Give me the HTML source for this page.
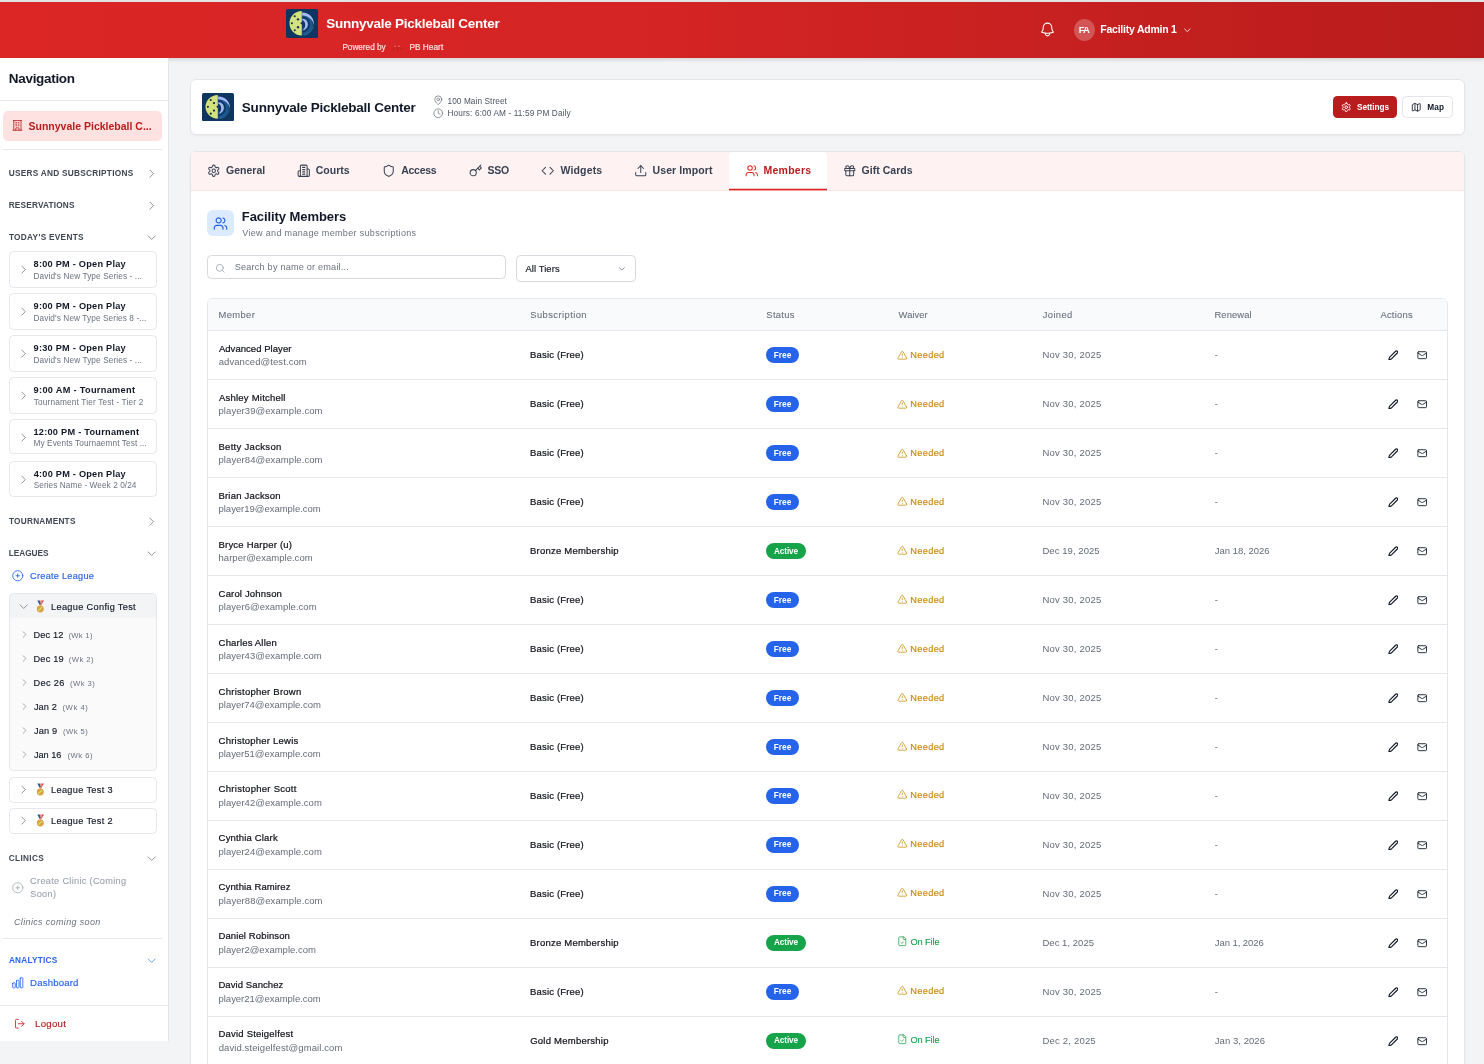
<!DOCTYPE html>
<html lang="en"><head><meta charset="utf-8"><title>Sunnyvale Pickleball Center - Members</title><style>
html,body{margin:0;padding:0}
body{width:1484px;height:1064px;overflow:hidden;background:#f3f4f6;position:relative;font-family:"Liberation Sans",sans-serif;-webkit-font-smoothing:antialiased}
#app{position:absolute;left:0;top:0;width:1484px;height:1064px;overflow:hidden;will-change:transform}
.t{position:absolute;white-space:nowrap}
.b{position:absolute;box-sizing:border-box}
</style></head><body><div id="app">
<div class="b" style="left:0.00px;top:0.00px;width:1484.00px;height:2.00px;background:#e3e6e7"></div>
<div class="b" style="left:0.00px;top:2.00px;width:1484.00px;height:56.00px;background:linear-gradient(90deg,#dc2626 0%,#d42424 45%,#b91c1c 100%);box-shadow:0 2px 4px rgba(0,0,0,.13)"></div>
<svg class="b" style="left:286.00px;top:9.00px" width="32.00" height="29.00" viewBox="0 0 32 28" preserveAspectRatio="none"><rect width="32" height="28" rx="1.6" fill="#0f365f"/><path d="M15.8 1.9A12.3 11.85 0 0 0 15.8 25.6Z" fill="#d3e37b"/><g fill="#1a2a4a"><circle cx="8.75" cy="7" r="1.05"/><circle cx="12" cy="10" r="1.15"/><circle cx="5.9" cy="13.75" r="1.05"/><circle cx="12" cy="17.5" r="1.15"/><circle cx="8.75" cy="20.5" r="1.05"/><circle cx="15.5" cy="13.75" r="1"/></g><path d="M16.2 4.6A10.6 10.5 0 0 1 16.2 25.6Z" fill="#1b588d"/><path d="M16.2 8A7 7 0 0 1 16.2 22" fill="none" stroke="#0f365f" stroke-width="1.5"/><path d="M16.2 11.6A3.4 3.4 0 0 1 16.2 18.4Z" fill="#0f365f"/><path d="M16.1 3.5C23 3.3 28.3 8.4 28 15.6 27 10.6 22.6 6.5 16.1 6.3Z" fill="#a9b9f6"/><path d="M16.3 9.3C20 9.4 21.9 12 21.8 14.9 21.7 17.8 19.8 20 16.5 20.8 18.5 19 19.3 17.2 19.2 14.9 19.1 12.8 18.2 11.3 16.3 10.5Z" fill="#a9b9f6"/><path d="M27.2 16.5C26.6 21 23.2 24.4 18 25.3" fill="none" stroke="#3f7bb0" stroke-width=".7" opacity=".8"/></svg>
<div class="t" style="left:326.27px;top:16px;font-size:13.50px;line-height:15px;font-weight:700;color:#ffffff;letter-spacing:-0.251px;">Sunnyvale Pickleball Center</div>
<div class="t" style="left:342.39px;top:43px;font-size:8.25px;line-height:9px;font-weight:400;color:#fbe3e3;letter-spacing:-0.036px;-webkit-text-stroke:0.15px #fbe3e3;">Powered by</div>
<div class="t" style="left:409.49px;top:43px;font-size:8.25px;line-height:9px;font-weight:400;color:#fbe3e3;letter-spacing:0.031px;-webkit-text-stroke:0.18px #fbe3e3;">PB Heart</div>
<svg class="b" style="left:391px;top:43px" width="14" height="9" viewBox="391 43 14 9"><g fill="#a81c20" opacity=".55"><circle cx="393.4" cy="49.1" r="1"/><circle cx="397.5" cy="49.5" r="1"/><circle cx="398.8" cy="47.6" r=".9"/><circle cx="401.6" cy="48.8" r="1.1"/></g><g fill="#f3b9b9" opacity=".5"><ellipse cx="395.2" cy="46.1" rx="1.1" ry=".6"/><ellipse cx="399" cy="46.2" rx="1" ry=".7"/></g></svg>
<svg class="b" style="left:1038.60px;top:20.50px;" width="17.00" height="17.00" viewBox="0 0 24 24" fill="none" stroke="#ffffff" stroke-width="1.5" stroke-linecap="round" stroke-linejoin="round"><path d="M14.857 17.082a23.848 23.848 0 005.454-1.31A8.967 8.967 0 0118 9.75v-.7V9A6 6 0 006 9v.75a8.967 8.967 0 01-2.312 6.022c1.733.64 3.56 1.085 5.455 1.31m5.714 0a24.255 24.255 0 01-5.714 0m5.714 0a3 3 0 11-5.714 0"/></svg>
<div class="b" style="left:1074.00px;top:19.00px;width:21.00px;height:22.00px;border-radius:50%;background:rgba(255,255,255,.24)"></div>
<div class="t" style="left:1078.82px;top:24px;font-size:9.50px;line-height:11px;font-weight:700;color:#ffffff;letter-spacing:-1.104px;">FA</div>
<div class="t" style="left:1100.28px;top:23px;font-size:10.50px;line-height:12px;font-weight:700;color:#ffffff;letter-spacing:-0.232px;">Facility Admin 1</div>
<svg class="b" style="left:1183.00px;top:26.00px;" width="8.60" height="8.60" viewBox="0 0 24 24" fill="none" stroke="#ffffff" stroke-width="2.2" stroke-linecap="round" stroke-linejoin="round"><path d="M19.5 8.25l-7.5 7.5-7.5-7.5"/></svg>
<div class="b" style="left:0.00px;top:58.00px;width:169.00px;height:983.00px;background:#ffffff;border-right:1px solid #e2e5ea"></div>
<div class="t" style="left:8.86px;top:71px;font-size:13.50px;line-height:15px;font-weight:700;color:#111827;letter-spacing:-0.313px;">Navigation</div>
<div class="b" style="left:0.00px;top:100.00px;width:168.00px;height:1.00px;background:#e5e7eb"></div>
<div class="b" style="left:3.00px;top:111.00px;width:159.00px;height:30.00px;background:#fee2e2;border-radius:5px"></div>
<svg class="b" style="left:10.50px;top:119.10px;" width="12.80" height="12.80" viewBox="0 0 24 24" fill="none" stroke="#b91c1c" stroke-width="1.6" stroke-linecap="round" stroke-linejoin="round"><path d="M3.75 21h16.5M4.5 3h15M5.25 3v18m13.5-18v18M9 6.75h1.5m-1.5 3h1.5m-1.5 3h1.5m3-6H15m-1.5 3H15m-1.5 3H15M9 21v-3.375c0-.621.504-1.125 1.125-1.125h3.75c.621 0 1.125.504 1.125 1.125V21"/></svg>
<div class="t" style="left:28.52px;top:120px;font-size:10.50px;line-height:12px;font-weight:700;color:#b91c1c;letter-spacing:0.002px;">Sunnyvale Pickleball C...</div>
<div class="b" style="left:3.00px;top:149.00px;width:159.00px;height:1.00px;background:#e5e7eb"></div>
<div class="t" style="left:8.70px;top:169px;font-size:8.25px;line-height:9px;font-weight:700;color:#3f4754;letter-spacing:0.275px;">USERS AND SUBSCRIPTIONS</div>
<svg class="b" style="left:145.50px;top:167.60px;" width="11.40" height="11.40" viewBox="0 0 24 24" fill="none" stroke="#6b7280" stroke-width="1.6" stroke-linecap="round" stroke-linejoin="round"><path d="M8.25 4.5l7.5 7.5-7.5 7.5"/></svg>
<div class="t" style="left:8.67px;top:201px;font-size:8.25px;line-height:9px;font-weight:700;color:#3f4754;letter-spacing:0.191px;">RESERVATIONS</div>
<svg class="b" style="left:145.50px;top:199.60px;" width="11.40" height="11.40" viewBox="0 0 24 24" fill="none" stroke="#6b7280" stroke-width="1.6" stroke-linecap="round" stroke-linejoin="round"><path d="M8.25 4.5l7.5 7.5-7.5 7.5"/></svg>
<div class="t" style="left:8.94px;top:233px;font-size:8.25px;line-height:9px;font-weight:700;color:#3f4754;letter-spacing:0.295px;">TODAY&#x27;S EVENTS</div>
<svg class="b" style="left:145.60px;top:231.50px;" width="11.40" height="11.40" viewBox="0 0 24 24" fill="none" stroke="#6b7280" stroke-width="1.6" stroke-linecap="round" stroke-linejoin="round"><path d="M19.5 8.25l-7.5 7.5-7.5-7.5"/></svg>
<div class="b" style="left:9.00px;top:251.00px;width:148.00px;height:36.50px;background:#fff;border:1px solid #e5e7eb;border-radius:4.5px"></div>
<svg class="b" style="left:17.60px;top:264.00px;" width="11.20" height="11.20" viewBox="0 0 24 24" fill="none" stroke="#6b7280" stroke-width="1.6" stroke-linecap="round" stroke-linejoin="round"><path d="M8.25 4.5l7.5 7.5-7.5 7.5"/></svg>
<div class="t" style="left:33.62px;top:259px;font-size:9.20px;line-height:10px;font-weight:700;color:#111827;letter-spacing:0.236px;">8:00 PM - Open Play</div>
<div class="t" style="left:33.49px;top:272px;font-size:8.25px;line-height:9px;font-weight:400;color:#6b7280;letter-spacing:0.103px;">David&#x27;s New Type Series - ...</div>
<div class="b" style="left:9.00px;top:293.00px;width:148.00px;height:36.50px;background:#fff;border:1px solid #e5e7eb;border-radius:4.5px"></div>
<svg class="b" style="left:17.60px;top:306.00px;" width="11.20" height="11.20" viewBox="0 0 24 24" fill="none" stroke="#6b7280" stroke-width="1.6" stroke-linecap="round" stroke-linejoin="round"><path d="M8.25 4.5l7.5 7.5-7.5 7.5"/></svg>
<div class="t" style="left:33.61px;top:301px;font-size:9.20px;line-height:10px;font-weight:700;color:#111827;letter-spacing:0.238px;">9:00 PM - Open Play</div>
<div class="t" style="left:33.49px;top:314px;font-size:8.25px;line-height:9px;font-weight:400;color:#6b7280;letter-spacing:0.096px;">David&#x27;s New Type Series 8 -...</div>
<div class="b" style="left:9.00px;top:335.00px;width:148.00px;height:36.50px;background:#fff;border:1px solid #e5e7eb;border-radius:4.5px"></div>
<svg class="b" style="left:17.60px;top:348.00px;" width="11.20" height="11.20" viewBox="0 0 24 24" fill="none" stroke="#6b7280" stroke-width="1.6" stroke-linecap="round" stroke-linejoin="round"><path d="M8.25 4.5l7.5 7.5-7.5 7.5"/></svg>
<div class="t" style="left:33.61px;top:343px;font-size:9.20px;line-height:10px;font-weight:700;color:#111827;letter-spacing:0.238px;">9:30 PM - Open Play</div>
<div class="t" style="left:33.49px;top:356px;font-size:8.25px;line-height:9px;font-weight:400;color:#6b7280;letter-spacing:0.103px;">David&#x27;s New Type Series - ...</div>
<div class="b" style="left:9.00px;top:377.00px;width:148.00px;height:36.50px;background:#fff;border:1px solid #e5e7eb;border-radius:4.5px"></div>
<svg class="b" style="left:17.60px;top:390.00px;" width="11.20" height="11.20" viewBox="0 0 24 24" fill="none" stroke="#6b7280" stroke-width="1.6" stroke-linecap="round" stroke-linejoin="round"><path d="M8.25 4.5l7.5 7.5-7.5 7.5"/></svg>
<div class="t" style="left:33.61px;top:385px;font-size:9.20px;line-height:10px;font-weight:700;color:#111827;letter-spacing:0.310px;">9:00 AM - Tournament</div>
<div class="t" style="left:33.79px;top:398px;font-size:8.25px;line-height:9px;font-weight:400;color:#6b7280;letter-spacing:0.164px;">Tournament Tier Test - Tier 2</div>
<div class="b" style="left:9.00px;top:419.20px;width:148.00px;height:35.30px;background:#fff;border:1px solid #e5e7eb;border-radius:4.5px"></div>
<svg class="b" style="left:17.60px;top:432.00px;" width="11.20" height="11.20" viewBox="0 0 24 24" fill="none" stroke="#6b7280" stroke-width="1.6" stroke-linecap="round" stroke-linejoin="round"><path d="M8.25 4.5l7.5 7.5-7.5 7.5"/></svg>
<div class="t" style="left:33.45px;top:427px;font-size:9.20px;line-height:10px;font-weight:700;color:#111827;letter-spacing:0.260px;">12:00 PM - Tournament</div>
<div class="t" style="left:33.49px;top:439px;font-size:8.25px;line-height:9px;font-weight:400;color:#6b7280;letter-spacing:0.093px;">My Events Tournaemnt Test ...</div>
<div class="b" style="left:9.00px;top:461.00px;width:148.00px;height:35.50px;background:#fff;border:1px solid #e5e7eb;border-radius:4.5px"></div>
<svg class="b" style="left:17.60px;top:474.00px;" width="11.20" height="11.20" viewBox="0 0 24 24" fill="none" stroke="#6b7280" stroke-width="1.6" stroke-linecap="round" stroke-linejoin="round"><path d="M8.25 4.5l7.5 7.5-7.5 7.5"/></svg>
<div class="t" style="left:33.72px;top:469px;font-size:9.20px;line-height:10px;font-weight:700;color:#111827;letter-spacing:0.228px;">4:00 PM - Open Play</div>
<div class="t" style="left:33.68px;top:481px;font-size:8.25px;line-height:9px;font-weight:400;color:#6b7280;letter-spacing:0.066px;">Series Name - Week 2 0/24</div>
<div class="t" style="left:8.94px;top:517px;font-size:8.25px;line-height:9px;font-weight:700;color:#3f4754;letter-spacing:0.245px;">TOURNAMENTS</div>
<svg class="b" style="left:145.50px;top:515.60px;" width="11.40" height="11.40" viewBox="0 0 24 24" fill="none" stroke="#6b7280" stroke-width="1.6" stroke-linecap="round" stroke-linejoin="round"><path d="M8.25 4.5l7.5 7.5-7.5 7.5"/></svg>
<div class="t" style="left:8.67px;top:549px;font-size:8.25px;line-height:9px;font-weight:700;color:#3f4754;letter-spacing:0.007px;">LEAGUES</div>
<svg class="b" style="left:145.60px;top:547.50px;" width="11.40" height="11.40" viewBox="0 0 24 24" fill="none" stroke="#6b7280" stroke-width="1.6" stroke-linecap="round" stroke-linejoin="round"><path d="M19.5 8.25l-7.5 7.5-7.5-7.5"/></svg>
<svg class="b" style="left:10.75px;top:568.85px;" width="13.50" height="13.50" viewBox="0 0 24 24" fill="none" stroke="#2563eb" stroke-width="1.5" stroke-linecap="round" stroke-linejoin="round"><path d="M12 9v6m3-3H9m12 0a9 9 0 11-18 0 9 9 0 0118 0z"/></svg>
<div class="t" style="left:30.12px;top:571px;font-size:9.20px;line-height:10px;font-weight:400;color:#2563eb;letter-spacing:0.246px;-webkit-text-stroke:0.15px #2563eb;">Create League</div>
<div class="b" style="left:9.00px;top:593.00px;width:148.00px;height:178.00px;background:#fafafa;border:1px solid #e5e7eb;border-radius:4.5px"></div>
<div class="b" style="left:10.00px;top:594.00px;width:146.00px;height:24.00px;background:#f3f4f6;border-radius:3.5px 3.5px 0 0"></div>
<svg class="b" style="left:17.70px;top:601.00px;" width="11.40" height="11.40" viewBox="0 0 24 24" fill="none" stroke="#6b7280" stroke-width="1.6" stroke-linecap="round" stroke-linejoin="round"><path d="M19.5 8.25l-7.5 7.5-7.5-7.5"/></svg>
<svg class="b" style="left:35.65px;top:599.55px" width="9" height="13" viewBox="0 0 9 13"><path d="M1.3.45h2.4l1.5 3.3-1.2 1.8z" fill="#1f5e9c"/><path d="M3.7.45h2.2l-.9 2.6-.5.2z" fill="#ef8a86"/><path d="M5.9.45h2.1L5 5.6l-1-.1z" fill="#d94040"/><path d="M5.6 1.6 3.9 5.4l.6.2L6.7 2z" fill="#f4a09a" opacity=".8"/><circle cx="4.3" cy="9.05" r="3.45" fill="#dba23f"/><path d="M2.5 10.4 5.9 7.3" stroke="#cbe97c" stroke-width="1.1" stroke-linecap="round" fill="none"/></svg>
<div class="t" style="left:51.05px;top:602px;font-size:9.20px;line-height:10px;font-weight:400;color:#111827;letter-spacing:0.327px;-webkit-text-stroke:0.15px #111827;">League Config Test</div>
<svg class="b" style="left:19.60px;top:629.60px;" width="9.00" height="9.00" viewBox="0 0 24 24" fill="none" stroke="#6b7280" stroke-width="1.6" stroke-linecap="round" stroke-linejoin="round"><path d="M8.25 4.5l7.5 7.5-7.5 7.5"/></svg>
<div class="t" style="left:33.55px;top:630px;font-size:9.20px;line-height:10px;font-weight:400;color:#111827;letter-spacing:0.143px;-webkit-text-stroke:0.15px #111827;">Dec 12</div>
<div class="t" style="left:68.41px;top:631px;font-size:7.70px;line-height:9px;font-weight:400;color:#6b7280;letter-spacing:0.287px;">(Wk 1)</div>
<svg class="b" style="left:19.60px;top:653.60px;" width="9.00" height="9.00" viewBox="0 0 24 24" fill="none" stroke="#6b7280" stroke-width="1.6" stroke-linecap="round" stroke-linejoin="round"><path d="M8.25 4.5l7.5 7.5-7.5 7.5"/></svg>
<div class="t" style="left:33.55px;top:654px;font-size:9.20px;line-height:10px;font-weight:400;color:#111827;letter-spacing:0.178px;-webkit-text-stroke:0.15px #111827;">Dec 19</div>
<div class="t" style="left:68.71px;top:655px;font-size:7.70px;line-height:9px;font-weight:400;color:#6b7280;letter-spacing:0.447px;">(Wk 2)</div>
<svg class="b" style="left:19.60px;top:677.60px;" width="9.00" height="9.00" viewBox="0 0 24 24" fill="none" stroke="#6b7280" stroke-width="1.6" stroke-linecap="round" stroke-linejoin="round"><path d="M8.25 4.5l7.5 7.5-7.5 7.5"/></svg>
<div class="t" style="left:33.55px;top:678px;font-size:9.20px;line-height:10px;font-weight:400;color:#111827;letter-spacing:0.332px;-webkit-text-stroke:0.15px #111827;">Dec 26</div>
<div class="t" style="left:70.01px;top:679px;font-size:7.70px;line-height:9px;font-weight:400;color:#6b7280;letter-spacing:0.447px;">(Wk 3)</div>
<svg class="b" style="left:19.60px;top:701.60px;" width="9.00" height="9.00" viewBox="0 0 24 24" fill="none" stroke="#6b7280" stroke-width="1.6" stroke-linecap="round" stroke-linejoin="round"><path d="M8.25 4.5l7.5 7.5-7.5 7.5"/></svg>
<div class="t" style="left:33.91px;top:702px;font-size:9.20px;line-height:10px;font-weight:400;color:#111827;letter-spacing:0.113px;-webkit-text-stroke:0.15px #111827;">Jan 2</div>
<div class="t" style="left:62.51px;top:703px;font-size:7.70px;line-height:9px;font-weight:400;color:#6b7280;letter-spacing:0.547px;">(Wk 4)</div>
<svg class="b" style="left:19.60px;top:725.60px;" width="9.00" height="9.00" viewBox="0 0 24 24" fill="none" stroke="#6b7280" stroke-width="1.6" stroke-linecap="round" stroke-linejoin="round"><path d="M8.25 4.5l7.5 7.5-7.5 7.5"/></svg>
<div class="t" style="left:33.91px;top:726px;font-size:9.20px;line-height:10px;font-weight:400;color:#111827;letter-spacing:0.156px;-webkit-text-stroke:0.15px #111827;">Jan 9</div>
<div class="t" style="left:62.91px;top:727px;font-size:7.70px;line-height:9px;font-weight:400;color:#6b7280;letter-spacing:0.467px;">(Wk 5)</div>
<svg class="b" style="left:19.60px;top:749.60px;" width="9.00" height="9.00" viewBox="0 0 24 24" fill="none" stroke="#6b7280" stroke-width="1.6" stroke-linecap="round" stroke-linejoin="round"><path d="M8.25 4.5l7.5 7.5-7.5 7.5"/></svg>
<div class="t" style="left:33.91px;top:750px;font-size:9.20px;line-height:10px;font-weight:400;color:#111827;letter-spacing:-0.025px;-webkit-text-stroke:0.15px #111827;">Jan 16</div>
<div class="t" style="left:67.51px;top:751px;font-size:7.70px;line-height:9px;font-weight:400;color:#6b7280;letter-spacing:0.467px;">(Wk 6)</div>
<div class="b" style="left:9.00px;top:777.00px;width:148.00px;height:25.70px;background:#fff;border:1px solid #e5e7eb;border-radius:4.5px"></div>
<svg class="b" style="left:17.60px;top:784.30px;" width="11.20" height="11.20" viewBox="0 0 24 24" fill="none" stroke="#6b7280" stroke-width="1.6" stroke-linecap="round" stroke-linejoin="round"><path d="M8.25 4.5l7.5 7.5-7.5 7.5"/></svg>
<svg class="b" style="left:35.65px;top:782.55px" width="9" height="13" viewBox="0 0 9 13"><path d="M1.3.45h2.4l1.5 3.3-1.2 1.8z" fill="#1f5e9c"/><path d="M3.7.45h2.2l-.9 2.6-.5.2z" fill="#ef8a86"/><path d="M5.9.45h2.1L5 5.6l-1-.1z" fill="#d94040"/><path d="M5.6 1.6 3.9 5.4l.6.2L6.7 2z" fill="#f4a09a" opacity=".8"/><circle cx="4.3" cy="9.05" r="3.45" fill="#dba23f"/><path d="M2.5 10.4 5.9 7.3" stroke="#cbe97c" stroke-width="1.1" stroke-linecap="round" fill="none"/></svg>
<div class="t" style="left:51.05px;top:785px;font-size:9.20px;line-height:10px;font-weight:400;color:#111827;letter-spacing:0.331px;-webkit-text-stroke:0.15px #111827;">League Test 3</div>
<div class="b" style="left:9.00px;top:808.30px;width:148.00px;height:25.70px;background:#fff;border:1px solid #e5e7eb;border-radius:4.5px"></div>
<svg class="b" style="left:17.60px;top:815.30px;" width="11.20" height="11.20" viewBox="0 0 24 24" fill="none" stroke="#6b7280" stroke-width="1.6" stroke-linecap="round" stroke-linejoin="round"><path d="M8.25 4.5l7.5 7.5-7.5 7.5"/></svg>
<svg class="b" style="left:35.65px;top:813.55px" width="9" height="13" viewBox="0 0 9 13"><path d="M1.3.45h2.4l1.5 3.3-1.2 1.8z" fill="#1f5e9c"/><path d="M3.7.45h2.2l-.9 2.6-.5.2z" fill="#ef8a86"/><path d="M5.9.45h2.1L5 5.6l-1-.1z" fill="#d94040"/><path d="M5.6 1.6 3.9 5.4l.6.2L6.7 2z" fill="#f4a09a" opacity=".8"/><circle cx="4.3" cy="9.05" r="3.45" fill="#dba23f"/><path d="M2.5 10.4 5.9 7.3" stroke="#cbe97c" stroke-width="1.1" stroke-linecap="round" fill="none"/></svg>
<div class="t" style="left:51.05px;top:816px;font-size:9.20px;line-height:10px;font-weight:400;color:#111827;letter-spacing:0.336px;-webkit-text-stroke:0.15px #111827;">League Test 2</div>
<div class="t" style="left:8.80px;top:854px;font-size:8.25px;line-height:9px;font-weight:700;color:#3f4754;letter-spacing:0.318px;">CLINICS</div>
<svg class="b" style="left:145.60px;top:852.50px;" width="11.40" height="11.40" viewBox="0 0 24 24" fill="none" stroke="#6b7280" stroke-width="1.6" stroke-linecap="round" stroke-linejoin="round"><path d="M19.5 8.25l-7.5 7.5-7.5-7.5"/></svg>
<svg class="b" style="left:10.85px;top:880.95px;" width="13.50" height="13.50" viewBox="0 0 24 24" fill="none" stroke="#9ca3af" stroke-width="1.3" stroke-linecap="round" stroke-linejoin="round"><path d="M12 9v6m3-3H9m12 0a9 9 0 11-18 0 9 9 0 0118 0z"/></svg>
<div class="t" style="left:30.12px;top:876px;font-size:9.20px;line-height:10px;font-weight:400;color:#9ca3af;letter-spacing:0.306px;-webkit-text-stroke:0.10px #9ca3af;">Create Clinic (Coming</div>
<div class="t" style="left:30.15px;top:889px;font-size:9.20px;line-height:10px;font-weight:400;color:#9ca3af;letter-spacing:0.372px;-webkit-text-stroke:0.10px #9ca3af;">Soon)</div>
<div class="t" style="left:14.00px;top:917px;font-size:9.00px;line-height:10px;font-weight:400;color:#6b7280;letter-spacing:0.346px;font-style:italic;">Clinics coming soon</div>
<div class="b" style="left:3.00px;top:938.00px;width:159.00px;height:1.00px;background:#e5e7eb"></div>
<div class="t" style="left:8.88px;top:956px;font-size:8.25px;line-height:9px;font-weight:700;color:#2563eb;letter-spacing:0.241px;">ANALYTICS</div>
<svg class="b" style="left:145.60px;top:954.50px;" width="11.40" height="11.40" viewBox="0 0 24 24" fill="none" stroke="#3b82f6" stroke-width="1.6" stroke-linecap="round" stroke-linejoin="round"><path d="M19.5 8.25l-7.5 7.5-7.5-7.5"/></svg>
<svg class="b" style="left:10.75px;top:975.65px;" width="13.50" height="13.50" viewBox="0 0 24 24" fill="none" stroke="#2563eb" stroke-width="1.5" stroke-linecap="round" stroke-linejoin="round"><path d="M3 13.125C3 12.504 3.504 12 4.125 12h2.25c.621 0 1.125.504 1.125 1.125v6.75C7.5 20.496 6.996 21 6.375 21h-2.25A1.125 1.125 0 013 19.875v-6.75zM9.75 8.625c0-.621.504-1.125 1.125-1.125h2.25c.621 0 1.125.504 1.125 1.125v11.25c0 .621-.504 1.125-1.125 1.125h-2.25a1.125 1.125 0 01-1.125-1.125V8.625zM16.5 4.125c0-.621.504-1.125 1.125-1.125h2.25C20.496 3 21 3.504 21 4.125v15.75c0 .621-.504 1.125-1.125 1.125h-2.25a1.125 1.125 0 01-1.125-1.125V4.125z"/></svg>
<div class="t" style="left:30.03px;top:977px;font-size:9.60px;line-height:11px;font-weight:400;color:#2563eb;letter-spacing:0.186px;-webkit-text-stroke:0.15px #2563eb;">Dashboard</div>
<div class="b" style="left:0.00px;top:1005.00px;width:168.00px;height:1.00px;background:#e5e7eb"></div>
<svg class="b" style="left:13.75px;top:1017.65px;" width="11.50" height="11.50" viewBox="0 0 24 24" fill="none" stroke="#dc2626" stroke-width="1.9" stroke-linecap="round" stroke-linejoin="round"><path d="M9 21H5a2 2 0 0 1-2-2V5a2 2 0 0 1 2-2h4"/><polyline points="16 17 21 12 16 7"/><line x1="21" x2="9" y1="12" y2="12"/></svg>
<div class="t" style="left:35.02px;top:1018px;font-size:9.70px;line-height:11px;font-weight:400;color:#b91c1c;letter-spacing:0.250px;-webkit-text-stroke:0.15px #b91c1c;">Logout</div>
<div class="b" style="left:190.00px;top:79.00px;width:1275.00px;height:56.00px;background:#fff;border:1px solid #e3e5e9;border-radius:6px;box-shadow:0 1px 2px rgba(0,0,0,.05)"></div>
<svg class="b" style="left:202.00px;top:92.80px" width="32.00" height="28.20" viewBox="0 0 32 28" preserveAspectRatio="none"><rect width="32" height="28" rx="1.6" fill="#0f365f"/><path d="M15.8 1.9A12.3 11.85 0 0 0 15.8 25.6Z" fill="#d3e37b"/><g fill="#1a2a4a"><circle cx="8.75" cy="7" r="1.05"/><circle cx="12" cy="10" r="1.15"/><circle cx="5.9" cy="13.75" r="1.05"/><circle cx="12" cy="17.5" r="1.15"/><circle cx="8.75" cy="20.5" r="1.05"/><circle cx="15.5" cy="13.75" r="1"/></g><path d="M16.2 4.6A10.6 10.5 0 0 1 16.2 25.6Z" fill="#1b588d"/><path d="M16.2 8A7 7 0 0 1 16.2 22" fill="none" stroke="#0f365f" stroke-width="1.5"/><path d="M16.2 11.6A3.4 3.4 0 0 1 16.2 18.4Z" fill="#0f365f"/><path d="M16.1 3.5C23 3.3 28.3 8.4 28 15.6 27 10.6 22.6 6.5 16.1 6.3Z" fill="#a9b9f6"/><path d="M16.3 9.3C20 9.4 21.9 12 21.8 14.9 21.7 17.8 19.8 20 16.5 20.8 18.5 19 19.3 17.2 19.2 14.9 19.1 12.8 18.2 11.3 16.3 10.5Z" fill="#a9b9f6"/><path d="M27.2 16.5C26.6 21 23.2 24.4 18 25.3" fill="none" stroke="#3f7bb0" stroke-width=".7" opacity=".8"/></svg>
<div class="t" style="left:241.87px;top:100px;font-size:13.50px;line-height:15px;font-weight:700;color:#111827;letter-spacing:-0.240px;">Sunnyvale Pickleball Center</div>
<svg class="b" style="left:433.35px;top:95.35px;" width="10.50" height="10.50" viewBox="0 0 24 24" fill="none" stroke="#6b7280" stroke-width="1.7" stroke-linecap="round" stroke-linejoin="round"><path d="M20 10c0 6-8 12-8 12s-8-6-8-12a8 8 0 0 1 16 0Z"/><circle cx="12" cy="10" r="3"/></svg>
<svg class="b" style="left:433.35px;top:108.35px;" width="10.50" height="10.50" viewBox="0 0 24 24" fill="none" stroke="#6b7280" stroke-width="1.7" stroke-linecap="round" stroke-linejoin="round"><circle cx="12" cy="12" r="10"/><polyline points="12 6 12 12 16 14"/></svg>
<div class="t" style="left:447.52px;top:97px;font-size:8.25px;line-height:9px;font-weight:400;color:#4b5563;letter-spacing:0.078px;">100 Main Street</div>
<div class="t" style="left:447.49px;top:109px;font-size:8.25px;line-height:9px;font-weight:400;color:#4b5563;letter-spacing:0.121px;">Hours: 6:00 AM - 11:59 PM Daily</div>
<div class="b" style="left:1333.00px;top:96.00px;width:64.00px;height:22.00px;background:#b91c1c;border-radius:4.5px"></div>
<svg class="b" style="left:1341.05px;top:101.85px;" width="10.50" height="10.50" viewBox="0 0 24 24" fill="none" stroke="#ffffff" stroke-width="2.2" stroke-linecap="round" stroke-linejoin="round"><path d="M12.22 2h-.44a2 2 0 0 0-2 2v.18a2 2 0 0 1-1 1.73l-.43.25a2 2 0 0 1-2 0l-.15-.08a2 2 0 0 0-2.73.73l-.22.38a2 2 0 0 0 .73 2.73l.15.1a2 2 0 0 1 1 1.72v.51a2 2 0 0 1-1 1.74l-.15.09a2 2 0 0 0-.73 2.73l.22.38a2 2 0 0 0 2.73.73l.15-.08a2 2 0 0 1 2 0l.43.25a2 2 0 0 1 1 1.73V20a2 2 0 0 0 2 2h.44a2 2 0 0 0 2-2v-.18a2 2 0 0 1 1-1.73l.43-.25a2 2 0 0 1 2 0l.15.08a2 2 0 0 0 2.73-.73l.22-.39a2 2 0 0 0-.73-2.73l-.15-.08a2 2 0 0 1-1-1.74v-.5a2 2 0 0 1 1-1.74l.15-.09a2 2 0 0 0 .73-2.73l-.22-.38a2 2 0 0 0-2.73-.73l-.15.08a2 2 0 0 1-2 0l-.43-.25a2 2 0 0 1-1-1.73V4a2 2 0 0 0-2-2z"/><circle cx="12" cy="12" r="3"/></svg>
<div class="t" style="left:1356.96px;top:103px;font-size:8.25px;line-height:9px;font-weight:700;color:#ffffff;letter-spacing:-0.060px;">Settings</div>
<div class="b" style="left:1402.40px;top:96.00px;width:50.20px;height:22.00px;background:#fff;border:1px solid #e2e5ea;border-radius:4.5px"></div>
<svg class="b" style="left:1411.15px;top:101.95px;" width="10.50" height="10.50" viewBox="0 0 24 24" fill="none" stroke="#111827" stroke-width="1.9" stroke-linecap="round" stroke-linejoin="round"><path d="M14.106 5.553a2 2 0 0 0 1.788 0l3.659-1.83A1 1 0 0 1 21 4.619v12.764a1 1 0 0 1-.553.894l-4.553 2.277a2 2 0 0 1-1.788 0l-4.212-2.106a2 2 0 0 0-1.788 0l-3.659 1.83A1 1 0 0 1 3 19.381V6.618a1 1 0 0 1 .553-.894l4.553-2.277a2 2 0 0 1 1.788 0z"/><path d="M15 5.764v15"/><path d="M9 3.236v15"/></svg>
<div class="t" style="left:1427.37px;top:103px;font-size:8.25px;line-height:9px;font-weight:700;color:#111827;letter-spacing:0.070px;">Map</div>
<div class="b" style="left:190.00px;top:151.00px;width:1275.00px;height:930.00px;background:#fff;border:1px solid #e3e5e9;border-radius:6px;box-shadow:0 1px 2px rgba(0,0,0,.05)"></div>
<div class="b" style="left:191.00px;top:152.00px;width:1273.00px;height:39.00px;background:#fef2f2;border-bottom:1px solid #fde3e3;border-radius:4px 4px 0 0"></div>
<div class="b" style="left:729.00px;top:152.40px;width:98.00px;height:37.60px;background:#fff;border-radius:4.5px 4.5px 0 0"></div>
<div class="b" style="left:729.00px;top:188.00px;width:98.00px;height:1.00px;background:rgba(220,38,38,.28)"></div>
<div class="b" style="left:729.00px;top:189.00px;width:98.00px;height:1.00px;background:#dc2626"></div>
<div class="b" style="left:729.00px;top:190.00px;width:98.00px;height:1.00px;background:rgba(220,38,38,.35)"></div>
<svg class="b" style="left:206.85px;top:163.85px;" width="13.50" height="13.50" viewBox="0 0 24 24" fill="none" stroke="#374151" stroke-width="1.8" stroke-linecap="round" stroke-linejoin="round"><path d="M12.22 2h-.44a2 2 0 0 0-2 2v.18a2 2 0 0 1-1 1.73l-.43.25a2 2 0 0 1-2 0l-.15-.08a2 2 0 0 0-2.73.73l-.22.38a2 2 0 0 0 .73 2.73l.15.1a2 2 0 0 1 1 1.72v.51a2 2 0 0 1-1 1.74l-.15.09a2 2 0 0 0-.73 2.73l.22.38a2 2 0 0 0 2.73.73l.15-.08a2 2 0 0 1 2 0l.43.25a2 2 0 0 1 1 1.73V20a2 2 0 0 0 2 2h.44a2 2 0 0 0 2-2v-.18a2 2 0 0 1 1-1.73l.43-.25a2 2 0 0 1 2 0l.15.08a2 2 0 0 0 2.73-.73l.22-.39a2 2 0 0 0-.73-2.73l-.15-.08a2 2 0 0 1-1-1.74v-.5a2 2 0 0 1 1-1.74l.15-.09a2 2 0 0 0 .73-2.73l-.22-.38a2 2 0 0 0-2.73-.73l-.15.08a2 2 0 0 1-2 0l-.43-.25a2 2 0 0 1-1-1.73V4a2 2 0 0 0-2-2z"/><circle cx="12" cy="12" r="3"/></svg>
<div class="t" style="left:225.94px;top:164px;font-size:10.50px;line-height:12px;font-weight:700;color:#374151;letter-spacing:0.037px;">General</div>
<svg class="b" style="left:296.65px;top:163.85px;" width="13.50" height="13.50" viewBox="0 0 24 24" fill="none" stroke="#374151" stroke-width="1.8" stroke-linecap="round" stroke-linejoin="round"><path d="M6 22V4a2 2 0 0 1 2-2h8a2 2 0 0 1 2 2v18Z"/><path d="M6 12H4a2 2 0 0 0-2 2v6a2 2 0 0 0 2 2h2"/><path d="M18 9h2a2 2 0 0 1 2 2v9a2 2 0 0 1-2 2h-2"/><path d="M10 6h4"/><path d="M10 10h4"/><path d="M10 14h4"/><path d="M10 18h4"/></svg>
<div class="t" style="left:315.74px;top:164px;font-size:10.50px;line-height:12px;font-weight:700;color:#374151;letter-spacing:-0.004px;">Courts</div>
<svg class="b" style="left:381.95px;top:163.85px;" width="13.50" height="13.50" viewBox="0 0 24 24" fill="none" stroke="#374151" stroke-width="1.8" stroke-linecap="round" stroke-linejoin="round"><path d="M20 13c0 5-3.5 7.5-7.66 8.95a1 1 0 0 1-.67-.01C7.5 20.5 4 18 4 13V6a1 1 0 0 1 1-1c2 0 4.5-1.2 6.24-2.72a1.17 1.17 0 0 1 1.52 0C14.51 3.81 17 5 19 5a1 1 0 0 1 1 1z"/></svg>
<div class="t" style="left:401.24px;top:164px;font-size:10.50px;line-height:12px;font-weight:700;color:#374151;letter-spacing:-0.288px;">Access</div>
<svg class="b" style="left:468.85px;top:163.85px;" width="13.50" height="13.50" viewBox="0 0 24 24" fill="none" stroke="#374151" stroke-width="1.8" stroke-linecap="round" stroke-linejoin="round"><circle cx="7.5" cy="15.5" r="5.5"/><path d="m21 2-9.6 9.6"/><path d="m15.5 7.5 3 3L22 7l-3-3"/></svg>
<div class="t" style="left:487.62px;top:164px;font-size:10.50px;line-height:12px;font-weight:700;color:#374151;letter-spacing:-0.340px;">SSO</div>
<svg class="b" style="left:540.95px;top:163.85px;" width="13.50" height="13.50" viewBox="0 0 24 24" fill="none" stroke="#374151" stroke-width="1.8" stroke-linecap="round" stroke-linejoin="round"><polyline points="16 18 22 12 16 6"/><polyline points="8 6 2 12 8 18"/></svg>
<div class="t" style="left:560.49px;top:164px;font-size:10.50px;line-height:12px;font-weight:700;color:#374151;letter-spacing:0.159px;">Widgets</div>
<svg class="b" style="left:633.85px;top:163.85px;" width="13.50" height="13.50" viewBox="0 0 24 24" fill="none" stroke="#374151" stroke-width="1.8" stroke-linecap="round" stroke-linejoin="round"><path d="M21 15v4a2 2 0 0 1-2 2H5a2 2 0 0 1-2-2v-4"/><polyline points="17 8 12 3 7 8"/><line x1="12" x2="12" y1="3" y2="15"/></svg>
<div class="t" style="left:652.52px;top:164px;font-size:10.50px;line-height:12px;font-weight:700;color:#374151;letter-spacing:0.108px;">User Import</div>
<svg class="b" style="left:744.85px;top:163.85px;" width="13.50" height="13.50" viewBox="0 0 24 24" fill="none" stroke="#dc2626" stroke-width="1.8" stroke-linecap="round" stroke-linejoin="round"><path d="M16 21v-2a4 4 0 0 0-4-4H6a4 4 0 0 0-4 4v2"/><circle cx="9" cy="7" r="4"/><path d="M22 21v-2a4 4 0 0 0-3-3.87"/><path d="M16 3.13a4 4 0 0 1 0 7.75"/></svg>
<div class="t" style="left:763.48px;top:164px;font-size:10.50px;line-height:12px;font-weight:700;color:#b91c1c;letter-spacing:0.247px;">Members</div>
<svg class="b" style="left:842.75px;top:163.85px;" width="13.50" height="13.50" viewBox="0 0 24 24" fill="none" stroke="#374151" stroke-width="1.8" stroke-linecap="round" stroke-linejoin="round"><rect x="3" y="8" width="18" height="4" rx="1"/><path d="M12 8v13"/><path d="M19 12v7a2 2 0 0 1-2 2H7a2 2 0 0 1-2-2v-7"/><path d="M7.5 8a2.5 2.5 0 0 1 0-5A4.8 8 0 0 1 12 8a4.8 8 0 0 1 4.5-5 2.5 2.5 0 0 1 0 5"/></svg>
<div class="t" style="left:861.54px;top:164px;font-size:10.50px;line-height:12px;font-weight:700;color:#374151;letter-spacing:0.028px;">Gift Cards</div>
<div class="b" style="left:207.00px;top:210.00px;width:27.00px;height:26.00px;background:#dbeafe;border-radius:6px"></div>
<svg class="b" style="left:212.50px;top:215.70px;" width="15.00" height="15.00" viewBox="0 0 24 24" fill="none" stroke="#2563eb" stroke-width="1.9" stroke-linecap="round" stroke-linejoin="round"><path d="M16 21v-2a4 4 0 0 0-4-4H6a4 4 0 0 0-4 4v2"/><circle cx="9" cy="7" r="4"/><path d="M22 21v-2a4 4 0 0 0-3-3.87"/><path d="M16 3.13a4 4 0 0 1 0 7.75"/></svg>
<div class="t" style="left:241.78px;top:209px;font-size:13.00px;line-height:15px;font-weight:700;color:#111827;letter-spacing:-0.069px;">Facility Members</div>
<div class="t" style="left:242.28px;top:228px;font-size:9.00px;line-height:10px;font-weight:400;color:#6b7280;letter-spacing:0.326px;">View and manage member subscriptions</div>
<div class="b" style="left:207.00px;top:255.00px;width:299.00px;height:24.00px;background:#fff;border:1px solid #d6d9de;border-radius:4.5px"></div>
<svg class="b" style="left:215.15px;top:262.55px;" width="10.50" height="10.50" viewBox="0 0 24 24" fill="none" stroke="#9ca3af" stroke-width="1.8" stroke-linecap="round" stroke-linejoin="round"><circle cx="11" cy="11" r="8"/><path d="m21 21-4.3-4.3"/></svg>
<div class="t" style="left:234.75px;top:262px;font-size:9.20px;line-height:10px;font-weight:400;color:#6b7280;letter-spacing:0.171px;">Search by name or email...</div>
<div class="b" style="left:516.00px;top:255.00px;width:120.00px;height:27.00px;background:#fff;border:1px solid #d6d9de;border-radius:4.5px"></div>
<div class="t" style="left:525.39px;top:263px;font-size:9.40px;line-height:11px;font-weight:400;color:#111827;letter-spacing:0.110px;-webkit-text-stroke:0.15px #111827;">All Tiers</div>
<svg class="b" style="left:617.40px;top:263.60px;" width="9.80" height="9.80" viewBox="0 0 24 24" fill="none" stroke="#6b7280" stroke-width="1.9" stroke-linecap="round" stroke-linejoin="round"><path d="m6 9 6 6 6-6"/></svg>
<div class="b" style="left:207.00px;top:298.00px;width:1241.00px;height:800.00px;background:#fff;border:1px solid #e5e7eb;border-radius:6px 6px 0 0"></div>
<div class="b" style="left:208.00px;top:299.00px;width:1239.00px;height:31.90px;background:#f9fafb;border-bottom:1px solid #e5e7eb;border-radius:5px 5px 0 0"></div>
<div class="t" style="left:218.44px;top:309px;font-size:9.40px;line-height:11px;font-weight:400;color:#6b7280;letter-spacing:0.401px;-webkit-text-stroke:0.10px #6b7280;">Member</div>
<div class="t" style="left:530.24px;top:309px;font-size:9.40px;line-height:11px;font-weight:400;color:#6b7280;letter-spacing:0.433px;-webkit-text-stroke:0.10px #6b7280;">Subscription</div>
<div class="t" style="left:766.34px;top:309px;font-size:9.40px;line-height:11px;font-weight:400;color:#6b7280;letter-spacing:0.294px;-webkit-text-stroke:0.10px #6b7280;">Status</div>
<div class="t" style="left:898.58px;top:309px;font-size:9.40px;line-height:11px;font-weight:400;color:#6b7280;letter-spacing:0.050px;-webkit-text-stroke:0.10px #6b7280;">Waiver</div>
<div class="t" style="left:1042.81px;top:309px;font-size:9.40px;line-height:11px;font-weight:400;color:#6b7280;letter-spacing:0.361px;-webkit-text-stroke:0.10px #6b7280;">Joined</div>
<div class="t" style="left:1214.44px;top:309px;font-size:9.40px;line-height:11px;font-weight:400;color:#6b7280;letter-spacing:0.129px;-webkit-text-stroke:0.10px #6b7280;">Renewal</div>
<div class="t" style="left:1380.39px;top:309px;font-size:9.40px;line-height:11px;font-weight:400;color:#6b7280;letter-spacing:0.264px;-webkit-text-stroke:0.10px #6b7280;">Actions</div>
<div class="t" style="left:218.89px;top:343px;font-size:9.50px;line-height:11px;font-weight:400;color:#12141c;letter-spacing:0.050px;-webkit-text-stroke:0.22px #12141c;">Advanced Player</div>
<div class="t" style="left:218.66px;top:356px;font-size:9.50px;line-height:11px;font-weight:400;color:#656c79;letter-spacing:0.084px;">advanced@test.com</div>
<div class="t" style="left:530.03px;top:349px;font-size:9.50px;line-height:11px;font-weight:400;color:#12141c;letter-spacing:0.172px;-webkit-text-stroke:0.22px #12141c;">Basic (Free)</div>
<div class="b" style="left:765.60px;top:346.89px;width:33.40px;height:16.00px;background:#2563eb;border-radius:8px"></div>
<div class="t" style="left:773.67px;top:351px;font-size:8.25px;line-height:9px;font-weight:700;color:#ffffff;letter-spacing:0.086px;">Free</div>
<svg class="b" style="left:897.25px;top:349.54px;" width="10.50" height="10.50" viewBox="0 0 24 24" fill="none" stroke="#ca8a04" stroke-width="1.7" stroke-linecap="round" stroke-linejoin="round"><path d="m21.73 18-8-14a2 2 0 0 0-3.48 0l-8 14A2 2 0 0 0 4 21h16a2 2 0 0 0 1.73-3"/><path d="M12 9v4"/><path d="M12 17h.01"/></svg>
<div class="t" style="left:910.25px;top:350px;font-size:9.20px;line-height:10px;font-weight:400;color:#c98a06;letter-spacing:0.354px;-webkit-text-stroke:0.15px #c98a06;">Needed</div>
<div class="t" style="left:1042.43px;top:349px;font-size:9.50px;line-height:11px;font-weight:400;color:#636b78;letter-spacing:0.220px;">Nov 30, 2025</div>
<div class="t" style="left:1214.65px;top:349px;font-size:9.50px;line-height:11px;font-weight:400;color:#636b78;">-</div>
<svg class="b" style="left:1387.80px;top:349.79px;" width="10.60" height="10.60" viewBox="0 0 24 24" fill="none" stroke="#111827" stroke-width="2.5" stroke-linecap="round" stroke-linejoin="round"><path d="M21.174 6.812a1 1 0 0 0-3.986-3.987L3.842 16.174a2 2 0 0 0-.5.83l-1.321 4.352a.5.5 0 0 0 .623.622l4.353-1.32a2 2 0 0 0 .83-.497z"/></svg>
<svg class="b" style="left:1417.00px;top:349.99px;" width="10.40" height="10.40" viewBox="0 0 24 24" fill="none" stroke="#2b3340" stroke-width="2.3" stroke-linecap="round" stroke-linejoin="round"><rect width="20" height="16" x="2" y="4" rx="2"/><path d="m22 7-8.97 5.7a1.94 1.94 0 0 1-2.06 0L2 7"/></svg>
<div class="b" style="left:208.00px;top:378.88px;width:1239.00px;height:1.00px;background:#e5e7eb"></div>
<div class="t" style="left:218.89px;top:392px;font-size:9.50px;line-height:11px;font-weight:400;color:#12141c;letter-spacing:0.232px;-webkit-text-stroke:0.22px #12141c;">Ashley Mitchell</div>
<div class="t" style="left:218.53px;top:405px;font-size:9.50px;line-height:11px;font-weight:400;color:#656c79;letter-spacing:0.074px;">player39@example.com</div>
<div class="t" style="left:530.03px;top:398px;font-size:9.50px;line-height:11px;font-weight:400;color:#12141c;letter-spacing:0.172px;-webkit-text-stroke:0.22px #12141c;">Basic (Free)</div>
<div class="b" style="left:765.60px;top:395.87px;width:33.40px;height:16.00px;background:#2563eb;border-radius:8px"></div>
<div class="t" style="left:773.67px;top:400px;font-size:8.25px;line-height:9px;font-weight:700;color:#ffffff;letter-spacing:0.086px;">Free</div>
<svg class="b" style="left:897.25px;top:398.52px;" width="10.50" height="10.50" viewBox="0 0 24 24" fill="none" stroke="#ca8a04" stroke-width="1.7" stroke-linecap="round" stroke-linejoin="round"><path d="m21.73 18-8-14a2 2 0 0 0-3.48 0l-8 14A2 2 0 0 0 4 21h16a2 2 0 0 0 1.73-3"/><path d="M12 9v4"/><path d="M12 17h.01"/></svg>
<div class="t" style="left:910.25px;top:399px;font-size:9.20px;line-height:10px;font-weight:400;color:#c98a06;letter-spacing:0.354px;-webkit-text-stroke:0.15px #c98a06;">Needed</div>
<div class="t" style="left:1042.43px;top:398px;font-size:9.50px;line-height:11px;font-weight:400;color:#636b78;letter-spacing:0.220px;">Nov 30, 2025</div>
<div class="t" style="left:1214.65px;top:398px;font-size:9.50px;line-height:11px;font-weight:400;color:#636b78;">-</div>
<svg class="b" style="left:1387.80px;top:398.77px;" width="10.60" height="10.60" viewBox="0 0 24 24" fill="none" stroke="#111827" stroke-width="2.5" stroke-linecap="round" stroke-linejoin="round"><path d="M21.174 6.812a1 1 0 0 0-3.986-3.987L3.842 16.174a2 2 0 0 0-.5.83l-1.321 4.352a.5.5 0 0 0 .623.622l4.353-1.32a2 2 0 0 0 .83-.497z"/></svg>
<svg class="b" style="left:1417.00px;top:398.97px;" width="10.40" height="10.40" viewBox="0 0 24 24" fill="none" stroke="#2b3340" stroke-width="2.3" stroke-linecap="round" stroke-linejoin="round"><rect width="20" height="16" x="2" y="4" rx="2"/><path d="m22 7-8.97 5.7a1.94 1.94 0 0 1-2.06 0L2 7"/></svg>
<div class="b" style="left:208.00px;top:427.86px;width:1239.00px;height:1.00px;background:#e5e7eb"></div>
<div class="t" style="left:218.43px;top:441px;font-size:9.50px;line-height:11px;font-weight:400;color:#12141c;letter-spacing:0.309px;-webkit-text-stroke:0.22px #12141c;">Betty Jackson</div>
<div class="t" style="left:218.53px;top:454px;font-size:9.50px;line-height:11px;font-weight:400;color:#656c79;letter-spacing:0.074px;">player84@example.com</div>
<div class="t" style="left:530.03px;top:447px;font-size:9.50px;line-height:11px;font-weight:400;color:#12141c;letter-spacing:0.172px;-webkit-text-stroke:0.22px #12141c;">Basic (Free)</div>
<div class="b" style="left:765.60px;top:444.85px;width:33.40px;height:16.00px;background:#2563eb;border-radius:8px"></div>
<div class="t" style="left:773.67px;top:449px;font-size:8.25px;line-height:9px;font-weight:700;color:#ffffff;letter-spacing:0.086px;">Free</div>
<svg class="b" style="left:897.25px;top:447.50px;" width="10.50" height="10.50" viewBox="0 0 24 24" fill="none" stroke="#ca8a04" stroke-width="1.7" stroke-linecap="round" stroke-linejoin="round"><path d="m21.73 18-8-14a2 2 0 0 0-3.48 0l-8 14A2 2 0 0 0 4 21h16a2 2 0 0 0 1.73-3"/><path d="M12 9v4"/><path d="M12 17h.01"/></svg>
<div class="t" style="left:910.25px;top:448px;font-size:9.20px;line-height:10px;font-weight:400;color:#c98a06;letter-spacing:0.354px;-webkit-text-stroke:0.15px #c98a06;">Needed</div>
<div class="t" style="left:1042.43px;top:447px;font-size:9.50px;line-height:11px;font-weight:400;color:#636b78;letter-spacing:0.220px;">Nov 30, 2025</div>
<div class="t" style="left:1214.65px;top:447px;font-size:9.50px;line-height:11px;font-weight:400;color:#636b78;">-</div>
<svg class="b" style="left:1387.80px;top:447.75px;" width="10.60" height="10.60" viewBox="0 0 24 24" fill="none" stroke="#111827" stroke-width="2.5" stroke-linecap="round" stroke-linejoin="round"><path d="M21.174 6.812a1 1 0 0 0-3.986-3.987L3.842 16.174a2 2 0 0 0-.5.83l-1.321 4.352a.5.5 0 0 0 .623.622l4.353-1.32a2 2 0 0 0 .83-.497z"/></svg>
<svg class="b" style="left:1417.00px;top:447.95px;" width="10.40" height="10.40" viewBox="0 0 24 24" fill="none" stroke="#2b3340" stroke-width="2.3" stroke-linecap="round" stroke-linejoin="round"><rect width="20" height="16" x="2" y="4" rx="2"/><path d="m22 7-8.97 5.7a1.94 1.94 0 0 1-2.06 0L2 7"/></svg>
<div class="b" style="left:208.00px;top:476.84px;width:1239.00px;height:1.00px;background:#e5e7eb"></div>
<div class="t" style="left:218.43px;top:490px;font-size:9.50px;line-height:11px;font-weight:400;color:#12141c;letter-spacing:0.207px;-webkit-text-stroke:0.22px #12141c;">Brian Jackson</div>
<div class="t" style="left:218.53px;top:503px;font-size:9.50px;line-height:11px;font-weight:400;color:#656c79;letter-spacing:-0.021px;">player19@example.com</div>
<div class="t" style="left:530.03px;top:496px;font-size:9.50px;line-height:11px;font-weight:400;color:#12141c;letter-spacing:0.172px;-webkit-text-stroke:0.22px #12141c;">Basic (Free)</div>
<div class="b" style="left:765.60px;top:493.83px;width:33.40px;height:16.00px;background:#2563eb;border-radius:8px"></div>
<div class="t" style="left:773.67px;top:498px;font-size:8.25px;line-height:9px;font-weight:700;color:#ffffff;letter-spacing:0.086px;">Free</div>
<svg class="b" style="left:897.25px;top:496.48px;" width="10.50" height="10.50" viewBox="0 0 24 24" fill="none" stroke="#ca8a04" stroke-width="1.7" stroke-linecap="round" stroke-linejoin="round"><path d="m21.73 18-8-14a2 2 0 0 0-3.48 0l-8 14A2 2 0 0 0 4 21h16a2 2 0 0 0 1.73-3"/><path d="M12 9v4"/><path d="M12 17h.01"/></svg>
<div class="t" style="left:910.25px;top:497px;font-size:9.20px;line-height:10px;font-weight:400;color:#c98a06;letter-spacing:0.354px;-webkit-text-stroke:0.15px #c98a06;">Needed</div>
<div class="t" style="left:1042.43px;top:496px;font-size:9.50px;line-height:11px;font-weight:400;color:#636b78;letter-spacing:0.220px;">Nov 30, 2025</div>
<div class="t" style="left:1214.65px;top:496px;font-size:9.50px;line-height:11px;font-weight:400;color:#636b78;">-</div>
<svg class="b" style="left:1387.80px;top:496.73px;" width="10.60" height="10.60" viewBox="0 0 24 24" fill="none" stroke="#111827" stroke-width="2.5" stroke-linecap="round" stroke-linejoin="round"><path d="M21.174 6.812a1 1 0 0 0-3.986-3.987L3.842 16.174a2 2 0 0 0-.5.83l-1.321 4.352a.5.5 0 0 0 .623.622l4.353-1.32a2 2 0 0 0 .83-.497z"/></svg>
<svg class="b" style="left:1417.00px;top:496.93px;" width="10.40" height="10.40" viewBox="0 0 24 24" fill="none" stroke="#2b3340" stroke-width="2.3" stroke-linecap="round" stroke-linejoin="round"><rect width="20" height="16" x="2" y="4" rx="2"/><path d="m22 7-8.97 5.7a1.94 1.94 0 0 1-2.06 0L2 7"/></svg>
<div class="b" style="left:208.00px;top:525.82px;width:1239.00px;height:1.00px;background:#e5e7eb"></div>
<div class="t" style="left:218.43px;top:539px;font-size:9.50px;line-height:11px;font-weight:400;color:#12141c;letter-spacing:0.227px;-webkit-text-stroke:0.22px #12141c;">Bryce Harper (u)</div>
<div class="t" style="left:218.50px;top:552px;font-size:9.50px;line-height:11px;font-weight:400;color:#656c79;letter-spacing:0.031px;">harper@example.com</div>
<div class="t" style="left:530.03px;top:545px;font-size:9.50px;line-height:11px;font-weight:400;color:#12141c;letter-spacing:0.220px;-webkit-text-stroke:0.22px #12141c;">Bronze Membership</div>
<div class="b" style="left:765.60px;top:542.81px;width:40.60px;height:16.00px;background:#16a34a;border-radius:8px"></div>
<div class="t" style="left:773.88px;top:547px;font-size:8.25px;line-height:9px;font-weight:700;color:#ffffff;letter-spacing:-0.085px;">Active</div>
<svg class="b" style="left:897.25px;top:545.46px;" width="10.50" height="10.50" viewBox="0 0 24 24" fill="none" stroke="#ca8a04" stroke-width="1.7" stroke-linecap="round" stroke-linejoin="round"><path d="m21.73 18-8-14a2 2 0 0 0-3.48 0l-8 14A2 2 0 0 0 4 21h16a2 2 0 0 0 1.73-3"/><path d="M12 9v4"/><path d="M12 17h.01"/></svg>
<div class="t" style="left:910.25px;top:546px;font-size:9.20px;line-height:10px;font-weight:400;color:#c98a06;letter-spacing:0.354px;-webkit-text-stroke:0.15px #c98a06;">Needed</div>
<div class="t" style="left:1042.43px;top:545px;font-size:9.50px;line-height:11px;font-weight:400;color:#636b78;letter-spacing:0.065px;">Dec 19, 2025</div>
<div class="t" style="left:1214.81px;top:545px;font-size:9.50px;line-height:11px;font-weight:400;color:#636b78;letter-spacing:-0.020px;">Jan 18, 2026</div>
<svg class="b" style="left:1387.80px;top:545.71px;" width="10.60" height="10.60" viewBox="0 0 24 24" fill="none" stroke="#111827" stroke-width="2.5" stroke-linecap="round" stroke-linejoin="round"><path d="M21.174 6.812a1 1 0 0 0-3.986-3.987L3.842 16.174a2 2 0 0 0-.5.83l-1.321 4.352a.5.5 0 0 0 .623.622l4.353-1.32a2 2 0 0 0 .83-.497z"/></svg>
<svg class="b" style="left:1417.00px;top:545.91px;" width="10.40" height="10.40" viewBox="0 0 24 24" fill="none" stroke="#2b3340" stroke-width="2.3" stroke-linecap="round" stroke-linejoin="round"><rect width="20" height="16" x="2" y="4" rx="2"/><path d="m22 7-8.97 5.7a1.94 1.94 0 0 1-2.06 0L2 7"/></svg>
<div class="b" style="left:208.00px;top:574.80px;width:1239.00px;height:1.00px;background:#e5e7eb"></div>
<div class="t" style="left:218.61px;top:588px;font-size:9.50px;line-height:11px;font-weight:400;color:#12141c;letter-spacing:0.166px;-webkit-text-stroke:0.22px #12141c;">Carol Johnson</div>
<div class="t" style="left:218.53px;top:601px;font-size:9.50px;line-height:11px;font-weight:400;color:#656c79;letter-spacing:0.044px;">player6@example.com</div>
<div class="t" style="left:530.03px;top:594px;font-size:9.50px;line-height:11px;font-weight:400;color:#12141c;letter-spacing:0.172px;-webkit-text-stroke:0.22px #12141c;">Basic (Free)</div>
<div class="b" style="left:765.60px;top:591.79px;width:33.40px;height:16.00px;background:#2563eb;border-radius:8px"></div>
<div class="t" style="left:773.67px;top:596px;font-size:8.25px;line-height:9px;font-weight:700;color:#ffffff;letter-spacing:0.086px;">Free</div>
<svg class="b" style="left:897.25px;top:594.44px;" width="10.50" height="10.50" viewBox="0 0 24 24" fill="none" stroke="#ca8a04" stroke-width="1.7" stroke-linecap="round" stroke-linejoin="round"><path d="m21.73 18-8-14a2 2 0 0 0-3.48 0l-8 14A2 2 0 0 0 4 21h16a2 2 0 0 0 1.73-3"/><path d="M12 9v4"/><path d="M12 17h.01"/></svg>
<div class="t" style="left:910.25px;top:595px;font-size:9.20px;line-height:10px;font-weight:400;color:#c98a06;letter-spacing:0.354px;-webkit-text-stroke:0.15px #c98a06;">Needed</div>
<div class="t" style="left:1042.43px;top:594px;font-size:9.50px;line-height:11px;font-weight:400;color:#636b78;letter-spacing:0.220px;">Nov 30, 2025</div>
<div class="t" style="left:1214.65px;top:594px;font-size:9.50px;line-height:11px;font-weight:400;color:#636b78;">-</div>
<svg class="b" style="left:1387.80px;top:594.69px;" width="10.60" height="10.60" viewBox="0 0 24 24" fill="none" stroke="#111827" stroke-width="2.5" stroke-linecap="round" stroke-linejoin="round"><path d="M21.174 6.812a1 1 0 0 0-3.986-3.987L3.842 16.174a2 2 0 0 0-.5.83l-1.321 4.352a.5.5 0 0 0 .623.622l4.353-1.32a2 2 0 0 0 .83-.497z"/></svg>
<svg class="b" style="left:1417.00px;top:594.89px;" width="10.40" height="10.40" viewBox="0 0 24 24" fill="none" stroke="#2b3340" stroke-width="2.3" stroke-linecap="round" stroke-linejoin="round"><rect width="20" height="16" x="2" y="4" rx="2"/><path d="m22 7-8.97 5.7a1.94 1.94 0 0 1-2.06 0L2 7"/></svg>
<div class="b" style="left:208.00px;top:623.78px;width:1239.00px;height:1.00px;background:#e5e7eb"></div>
<div class="t" style="left:218.61px;top:637px;font-size:9.50px;line-height:11px;font-weight:400;color:#12141c;letter-spacing:0.173px;-webkit-text-stroke:0.22px #12141c;">Charles Allen</div>
<div class="t" style="left:218.53px;top:650px;font-size:9.50px;line-height:11px;font-weight:400;color:#656c79;letter-spacing:0.032px;">player43@example.com</div>
<div class="t" style="left:530.03px;top:643px;font-size:9.50px;line-height:11px;font-weight:400;color:#12141c;letter-spacing:0.172px;-webkit-text-stroke:0.22px #12141c;">Basic (Free)</div>
<div class="b" style="left:765.60px;top:640.77px;width:33.40px;height:16.00px;background:#2563eb;border-radius:8px"></div>
<div class="t" style="left:773.67px;top:645px;font-size:8.25px;line-height:9px;font-weight:700;color:#ffffff;letter-spacing:0.086px;">Free</div>
<svg class="b" style="left:897.25px;top:643.42px;" width="10.50" height="10.50" viewBox="0 0 24 24" fill="none" stroke="#ca8a04" stroke-width="1.7" stroke-linecap="round" stroke-linejoin="round"><path d="m21.73 18-8-14a2 2 0 0 0-3.48 0l-8 14A2 2 0 0 0 4 21h16a2 2 0 0 0 1.73-3"/><path d="M12 9v4"/><path d="M12 17h.01"/></svg>
<div class="t" style="left:910.25px;top:644px;font-size:9.20px;line-height:10px;font-weight:400;color:#c98a06;letter-spacing:0.354px;-webkit-text-stroke:0.15px #c98a06;">Needed</div>
<div class="t" style="left:1042.43px;top:643px;font-size:9.50px;line-height:11px;font-weight:400;color:#636b78;letter-spacing:0.220px;">Nov 30, 2025</div>
<div class="t" style="left:1214.65px;top:643px;font-size:9.50px;line-height:11px;font-weight:400;color:#636b78;">-</div>
<svg class="b" style="left:1387.80px;top:643.67px;" width="10.60" height="10.60" viewBox="0 0 24 24" fill="none" stroke="#111827" stroke-width="2.5" stroke-linecap="round" stroke-linejoin="round"><path d="M21.174 6.812a1 1 0 0 0-3.986-3.987L3.842 16.174a2 2 0 0 0-.5.83l-1.321 4.352a.5.5 0 0 0 .623.622l4.353-1.32a2 2 0 0 0 .83-.497z"/></svg>
<svg class="b" style="left:1417.00px;top:643.87px;" width="10.40" height="10.40" viewBox="0 0 24 24" fill="none" stroke="#2b3340" stroke-width="2.3" stroke-linecap="round" stroke-linejoin="round"><rect width="20" height="16" x="2" y="4" rx="2"/><path d="m22 7-8.97 5.7a1.94 1.94 0 0 1-2.06 0L2 7"/></svg>
<div class="b" style="left:208.00px;top:672.76px;width:1239.00px;height:1.00px;background:#e5e7eb"></div>
<div class="t" style="left:218.61px;top:686px;font-size:9.50px;line-height:11px;font-weight:400;color:#12141c;letter-spacing:0.249px;-webkit-text-stroke:0.22px #12141c;">Christopher Brown</div>
<div class="t" style="left:218.53px;top:699px;font-size:9.50px;line-height:11px;font-weight:400;color:#656c79;letter-spacing:-0.015px;">player74@example.com</div>
<div class="t" style="left:530.03px;top:692px;font-size:9.50px;line-height:11px;font-weight:400;color:#12141c;letter-spacing:0.172px;-webkit-text-stroke:0.22px #12141c;">Basic (Free)</div>
<div class="b" style="left:765.60px;top:689.75px;width:33.40px;height:16.00px;background:#2563eb;border-radius:8px"></div>
<div class="t" style="left:773.67px;top:694px;font-size:8.25px;line-height:9px;font-weight:700;color:#ffffff;letter-spacing:0.086px;">Free</div>
<svg class="b" style="left:897.25px;top:692.40px;" width="10.50" height="10.50" viewBox="0 0 24 24" fill="none" stroke="#ca8a04" stroke-width="1.7" stroke-linecap="round" stroke-linejoin="round"><path d="m21.73 18-8-14a2 2 0 0 0-3.48 0l-8 14A2 2 0 0 0 4 21h16a2 2 0 0 0 1.73-3"/><path d="M12 9v4"/><path d="M12 17h.01"/></svg>
<div class="t" style="left:910.25px;top:693px;font-size:9.20px;line-height:10px;font-weight:400;color:#c98a06;letter-spacing:0.354px;-webkit-text-stroke:0.15px #c98a06;">Needed</div>
<div class="t" style="left:1042.43px;top:692px;font-size:9.50px;line-height:11px;font-weight:400;color:#636b78;letter-spacing:0.220px;">Nov 30, 2025</div>
<div class="t" style="left:1214.65px;top:692px;font-size:9.50px;line-height:11px;font-weight:400;color:#636b78;">-</div>
<svg class="b" style="left:1387.80px;top:692.65px;" width="10.60" height="10.60" viewBox="0 0 24 24" fill="none" stroke="#111827" stroke-width="2.5" stroke-linecap="round" stroke-linejoin="round"><path d="M21.174 6.812a1 1 0 0 0-3.986-3.987L3.842 16.174a2 2 0 0 0-.5.83l-1.321 4.352a.5.5 0 0 0 .623.622l4.353-1.32a2 2 0 0 0 .83-.497z"/></svg>
<svg class="b" style="left:1417.00px;top:692.85px;" width="10.40" height="10.40" viewBox="0 0 24 24" fill="none" stroke="#2b3340" stroke-width="2.3" stroke-linecap="round" stroke-linejoin="round"><rect width="20" height="16" x="2" y="4" rx="2"/><path d="m22 7-8.97 5.7a1.94 1.94 0 0 1-2.06 0L2 7"/></svg>
<div class="b" style="left:208.00px;top:721.74px;width:1239.00px;height:1.00px;background:#e5e7eb"></div>
<div class="t" style="left:218.61px;top:735px;font-size:9.50px;line-height:11px;font-weight:400;color:#12141c;letter-spacing:0.228px;-webkit-text-stroke:0.22px #12141c;">Christopher Lewis</div>
<div class="t" style="left:218.53px;top:748px;font-size:9.50px;line-height:11px;font-weight:400;color:#656c79;letter-spacing:-0.021px;">player51@example.com</div>
<div class="t" style="left:530.03px;top:741px;font-size:9.50px;line-height:11px;font-weight:400;color:#12141c;letter-spacing:0.172px;-webkit-text-stroke:0.22px #12141c;">Basic (Free)</div>
<div class="b" style="left:765.60px;top:738.73px;width:33.40px;height:16.00px;background:#2563eb;border-radius:8px"></div>
<div class="t" style="left:773.67px;top:743px;font-size:8.25px;line-height:9px;font-weight:700;color:#ffffff;letter-spacing:0.086px;">Free</div>
<svg class="b" style="left:897.25px;top:741.38px;" width="10.50" height="10.50" viewBox="0 0 24 24" fill="none" stroke="#ca8a04" stroke-width="1.7" stroke-linecap="round" stroke-linejoin="round"><path d="m21.73 18-8-14a2 2 0 0 0-3.48 0l-8 14A2 2 0 0 0 4 21h16a2 2 0 0 0 1.73-3"/><path d="M12 9v4"/><path d="M12 17h.01"/></svg>
<div class="t" style="left:910.25px;top:742px;font-size:9.20px;line-height:10px;font-weight:400;color:#c98a06;letter-spacing:0.354px;-webkit-text-stroke:0.15px #c98a06;">Needed</div>
<div class="t" style="left:1042.43px;top:741px;font-size:9.50px;line-height:11px;font-weight:400;color:#636b78;letter-spacing:0.220px;">Nov 30, 2025</div>
<div class="t" style="left:1214.65px;top:741px;font-size:9.50px;line-height:11px;font-weight:400;color:#636b78;">-</div>
<svg class="b" style="left:1387.80px;top:741.63px;" width="10.60" height="10.60" viewBox="0 0 24 24" fill="none" stroke="#111827" stroke-width="2.5" stroke-linecap="round" stroke-linejoin="round"><path d="M21.174 6.812a1 1 0 0 0-3.986-3.987L3.842 16.174a2 2 0 0 0-.5.83l-1.321 4.352a.5.5 0 0 0 .623.622l4.353-1.32a2 2 0 0 0 .83-.497z"/></svg>
<svg class="b" style="left:1417.00px;top:741.83px;" width="10.40" height="10.40" viewBox="0 0 24 24" fill="none" stroke="#2b3340" stroke-width="2.3" stroke-linecap="round" stroke-linejoin="round"><rect width="20" height="16" x="2" y="4" rx="2"/><path d="m22 7-8.97 5.7a1.94 1.94 0 0 1-2.06 0L2 7"/></svg>
<div class="b" style="left:208.00px;top:770.72px;width:1239.00px;height:1.00px;background:#e5e7eb"></div>
<div class="t" style="left:218.61px;top:783px;font-size:9.50px;line-height:11px;font-weight:400;color:#12141c;letter-spacing:0.276px;-webkit-text-stroke:0.22px #12141c;">Christopher Scott</div>
<div class="t" style="left:218.53px;top:797px;font-size:9.50px;line-height:11px;font-weight:400;color:#656c79;letter-spacing:0.037px;">player42@example.com</div>
<div class="t" style="left:530.03px;top:790px;font-size:9.50px;line-height:11px;font-weight:400;color:#12141c;letter-spacing:0.172px;-webkit-text-stroke:0.22px #12141c;">Basic (Free)</div>
<div class="b" style="left:765.60px;top:787.71px;width:33.40px;height:16.00px;background:#2563eb;border-radius:8px"></div>
<div class="t" style="left:773.67px;top:791px;font-size:8.25px;line-height:9px;font-weight:700;color:#ffffff;letter-spacing:0.086px;">Free</div>
<svg class="b" style="left:897.25px;top:789.36px;" width="10.50" height="10.50" viewBox="0 0 24 24" fill="none" stroke="#ca8a04" stroke-width="1.7" stroke-linecap="round" stroke-linejoin="round"><path d="m21.73 18-8-14a2 2 0 0 0-3.48 0l-8 14A2 2 0 0 0 4 21h16a2 2 0 0 0 1.73-3"/><path d="M12 9v4"/><path d="M12 17h.01"/></svg>
<div class="t" style="left:910.25px;top:790px;font-size:9.20px;line-height:10px;font-weight:400;color:#c98a06;letter-spacing:0.354px;-webkit-text-stroke:0.15px #c98a06;">Needed</div>
<div class="t" style="left:1042.43px;top:790px;font-size:9.50px;line-height:11px;font-weight:400;color:#636b78;letter-spacing:0.220px;">Nov 30, 2025</div>
<div class="t" style="left:1214.65px;top:790px;font-size:9.50px;line-height:11px;font-weight:400;color:#636b78;">-</div>
<svg class="b" style="left:1387.80px;top:790.61px;" width="10.60" height="10.60" viewBox="0 0 24 24" fill="none" stroke="#111827" stroke-width="2.5" stroke-linecap="round" stroke-linejoin="round"><path d="M21.174 6.812a1 1 0 0 0-3.986-3.987L3.842 16.174a2 2 0 0 0-.5.83l-1.321 4.352a.5.5 0 0 0 .623.622l4.353-1.32a2 2 0 0 0 .83-.497z"/></svg>
<svg class="b" style="left:1417.00px;top:790.81px;" width="10.40" height="10.40" viewBox="0 0 24 24" fill="none" stroke="#2b3340" stroke-width="2.3" stroke-linecap="round" stroke-linejoin="round"><rect width="20" height="16" x="2" y="4" rx="2"/><path d="m22 7-8.97 5.7a1.94 1.94 0 0 1-2.06 0L2 7"/></svg>
<div class="b" style="left:208.00px;top:819.70px;width:1239.00px;height:1.00px;background:#e5e7eb"></div>
<div class="t" style="left:218.61px;top:832px;font-size:9.50px;line-height:11px;font-weight:400;color:#12141c;letter-spacing:0.167px;-webkit-text-stroke:0.22px #12141c;">Cynthia Clark</div>
<div class="t" style="left:218.53px;top:846px;font-size:9.50px;line-height:11px;font-weight:400;color:#656c79;letter-spacing:0.037px;">player24@example.com</div>
<div class="t" style="left:530.03px;top:839px;font-size:9.50px;line-height:11px;font-weight:400;color:#12141c;letter-spacing:0.172px;-webkit-text-stroke:0.22px #12141c;">Basic (Free)</div>
<div class="b" style="left:765.60px;top:836.69px;width:33.40px;height:16.00px;background:#2563eb;border-radius:8px"></div>
<div class="t" style="left:773.67px;top:840px;font-size:8.25px;line-height:9px;font-weight:700;color:#ffffff;letter-spacing:0.086px;">Free</div>
<svg class="b" style="left:897.25px;top:838.34px;" width="10.50" height="10.50" viewBox="0 0 24 24" fill="none" stroke="#ca8a04" stroke-width="1.7" stroke-linecap="round" stroke-linejoin="round"><path d="m21.73 18-8-14a2 2 0 0 0-3.48 0l-8 14A2 2 0 0 0 4 21h16a2 2 0 0 0 1.73-3"/><path d="M12 9v4"/><path d="M12 17h.01"/></svg>
<div class="t" style="left:910.25px;top:839px;font-size:9.20px;line-height:10px;font-weight:400;color:#c98a06;letter-spacing:0.354px;-webkit-text-stroke:0.15px #c98a06;">Needed</div>
<div class="t" style="left:1042.43px;top:839px;font-size:9.50px;line-height:11px;font-weight:400;color:#636b78;letter-spacing:0.220px;">Nov 30, 2025</div>
<div class="t" style="left:1214.65px;top:839px;font-size:9.50px;line-height:11px;font-weight:400;color:#636b78;">-</div>
<svg class="b" style="left:1387.80px;top:839.59px;" width="10.60" height="10.60" viewBox="0 0 24 24" fill="none" stroke="#111827" stroke-width="2.5" stroke-linecap="round" stroke-linejoin="round"><path d="M21.174 6.812a1 1 0 0 0-3.986-3.987L3.842 16.174a2 2 0 0 0-.5.83l-1.321 4.352a.5.5 0 0 0 .623.622l4.353-1.32a2 2 0 0 0 .83-.497z"/></svg>
<svg class="b" style="left:1417.00px;top:839.79px;" width="10.40" height="10.40" viewBox="0 0 24 24" fill="none" stroke="#2b3340" stroke-width="2.3" stroke-linecap="round" stroke-linejoin="round"><rect width="20" height="16" x="2" y="4" rx="2"/><path d="m22 7-8.97 5.7a1.94 1.94 0 0 1-2.06 0L2 7"/></svg>
<div class="b" style="left:208.00px;top:868.68px;width:1239.00px;height:1.00px;background:#e5e7eb"></div>
<div class="t" style="left:218.61px;top:881px;font-size:9.50px;line-height:11px;font-weight:400;color:#12141c;letter-spacing:0.121px;-webkit-text-stroke:0.22px #12141c;">Cynthia Ramirez</div>
<div class="t" style="left:218.53px;top:895px;font-size:9.50px;line-height:11px;font-weight:400;color:#656c79;letter-spacing:0.074px;">player88@example.com</div>
<div class="t" style="left:530.03px;top:888px;font-size:9.50px;line-height:11px;font-weight:400;color:#12141c;letter-spacing:0.172px;-webkit-text-stroke:0.22px #12141c;">Basic (Free)</div>
<div class="b" style="left:765.60px;top:885.67px;width:33.40px;height:16.00px;background:#2563eb;border-radius:8px"></div>
<div class="t" style="left:773.67px;top:889px;font-size:8.25px;line-height:9px;font-weight:700;color:#ffffff;letter-spacing:0.086px;">Free</div>
<svg class="b" style="left:897.25px;top:887.32px;" width="10.50" height="10.50" viewBox="0 0 24 24" fill="none" stroke="#ca8a04" stroke-width="1.7" stroke-linecap="round" stroke-linejoin="round"><path d="m21.73 18-8-14a2 2 0 0 0-3.48 0l-8 14A2 2 0 0 0 4 21h16a2 2 0 0 0 1.73-3"/><path d="M12 9v4"/><path d="M12 17h.01"/></svg>
<div class="t" style="left:910.25px;top:888px;font-size:9.20px;line-height:10px;font-weight:400;color:#c98a06;letter-spacing:0.354px;-webkit-text-stroke:0.15px #c98a06;">Needed</div>
<div class="t" style="left:1042.43px;top:888px;font-size:9.50px;line-height:11px;font-weight:400;color:#636b78;letter-spacing:0.220px;">Nov 30, 2025</div>
<div class="t" style="left:1214.65px;top:888px;font-size:9.50px;line-height:11px;font-weight:400;color:#636b78;">-</div>
<svg class="b" style="left:1387.80px;top:888.57px;" width="10.60" height="10.60" viewBox="0 0 24 24" fill="none" stroke="#111827" stroke-width="2.5" stroke-linecap="round" stroke-linejoin="round"><path d="M21.174 6.812a1 1 0 0 0-3.986-3.987L3.842 16.174a2 2 0 0 0-.5.83l-1.321 4.352a.5.5 0 0 0 .623.622l4.353-1.32a2 2 0 0 0 .83-.497z"/></svg>
<svg class="b" style="left:1417.00px;top:888.77px;" width="10.40" height="10.40" viewBox="0 0 24 24" fill="none" stroke="#2b3340" stroke-width="2.3" stroke-linecap="round" stroke-linejoin="round"><rect width="20" height="16" x="2" y="4" rx="2"/><path d="m22 7-8.97 5.7a1.94 1.94 0 0 1-2.06 0L2 7"/></svg>
<div class="b" style="left:208.00px;top:917.66px;width:1239.00px;height:1.00px;background:#e5e7eb"></div>
<div class="t" style="left:218.43px;top:930px;font-size:9.50px;line-height:11px;font-weight:400;color:#12141c;letter-spacing:0.124px;-webkit-text-stroke:0.22px #12141c;">Daniel Robinson</div>
<div class="t" style="left:218.53px;top:944px;font-size:9.50px;line-height:11px;font-weight:400;color:#656c79;letter-spacing:0.005px;">player2@example.com</div>
<div class="t" style="left:530.03px;top:937px;font-size:9.50px;line-height:11px;font-weight:400;color:#12141c;letter-spacing:0.220px;-webkit-text-stroke:0.22px #12141c;">Bronze Membership</div>
<div class="b" style="left:765.60px;top:934.65px;width:40.60px;height:16.00px;background:#16a34a;border-radius:8px"></div>
<div class="t" style="left:773.88px;top:938px;font-size:8.25px;line-height:9px;font-weight:700;color:#ffffff;letter-spacing:-0.085px;">Active</div>
<svg class="b" style="left:897.35px;top:936.30px;" width="10.50" height="10.50" viewBox="0 0 24 24" fill="none" stroke="#16a34a" stroke-width="1.7" stroke-linecap="round" stroke-linejoin="round"><path d="M15 2H6a2 2 0 0 0-2 2v16a2 2 0 0 0 2 2h12a2 2 0 0 0 2-2V7Z"/><path d="M14 2v4a2 2 0 0 0 2 2h4"/><path d="m9 15 2 2 4-4"/></svg>
<div class="t" style="left:910.44px;top:937px;font-size:9.20px;line-height:10px;font-weight:400;color:#16a34a;letter-spacing:-0.060px;-webkit-text-stroke:0.15px #16a34a;">On File</div>
<div class="t" style="left:1042.43px;top:937px;font-size:9.50px;line-height:11px;font-weight:400;color:#636b78;letter-spacing:0.040px;">Dec 1, 2025</div>
<div class="t" style="left:1214.81px;top:937px;font-size:9.50px;line-height:11px;font-weight:400;color:#636b78;letter-spacing:-0.074px;">Jan 1, 2026</div>
<svg class="b" style="left:1387.80px;top:937.55px;" width="10.60" height="10.60" viewBox="0 0 24 24" fill="none" stroke="#111827" stroke-width="2.5" stroke-linecap="round" stroke-linejoin="round"><path d="M21.174 6.812a1 1 0 0 0-3.986-3.987L3.842 16.174a2 2 0 0 0-.5.83l-1.321 4.352a.5.5 0 0 0 .623.622l4.353-1.32a2 2 0 0 0 .83-.497z"/></svg>
<svg class="b" style="left:1417.00px;top:937.75px;" width="10.40" height="10.40" viewBox="0 0 24 24" fill="none" stroke="#2b3340" stroke-width="2.3" stroke-linecap="round" stroke-linejoin="round"><rect width="20" height="16" x="2" y="4" rx="2"/><path d="m22 7-8.97 5.7a1.94 1.94 0 0 1-2.06 0L2 7"/></svg>
<div class="b" style="left:208.00px;top:966.64px;width:1239.00px;height:1.00px;background:#e5e7eb"></div>
<div class="t" style="left:218.43px;top:979px;font-size:9.50px;line-height:11px;font-weight:400;color:#12141c;letter-spacing:0.084px;-webkit-text-stroke:0.22px #12141c;">David Sanchez</div>
<div class="t" style="left:218.53px;top:993px;font-size:9.50px;line-height:11px;font-weight:400;color:#656c79;letter-spacing:-0.021px;">player21@example.com</div>
<div class="t" style="left:530.03px;top:986px;font-size:9.50px;line-height:11px;font-weight:400;color:#12141c;letter-spacing:0.172px;-webkit-text-stroke:0.22px #12141c;">Basic (Free)</div>
<div class="b" style="left:765.60px;top:983.63px;width:33.40px;height:16.00px;background:#2563eb;border-radius:8px"></div>
<div class="t" style="left:773.67px;top:987px;font-size:8.25px;line-height:9px;font-weight:700;color:#ffffff;letter-spacing:0.086px;">Free</div>
<svg class="b" style="left:897.25px;top:985.28px;" width="10.50" height="10.50" viewBox="0 0 24 24" fill="none" stroke="#ca8a04" stroke-width="1.7" stroke-linecap="round" stroke-linejoin="round"><path d="m21.73 18-8-14a2 2 0 0 0-3.48 0l-8 14A2 2 0 0 0 4 21h16a2 2 0 0 0 1.73-3"/><path d="M12 9v4"/><path d="M12 17h.01"/></svg>
<div class="t" style="left:910.25px;top:986px;font-size:9.20px;line-height:10px;font-weight:400;color:#c98a06;letter-spacing:0.354px;-webkit-text-stroke:0.15px #c98a06;">Needed</div>
<div class="t" style="left:1042.43px;top:986px;font-size:9.50px;line-height:11px;font-weight:400;color:#636b78;letter-spacing:0.220px;">Nov 30, 2025</div>
<div class="t" style="left:1214.65px;top:986px;font-size:9.50px;line-height:11px;font-weight:400;color:#636b78;">-</div>
<svg class="b" style="left:1387.80px;top:986.53px;" width="10.60" height="10.60" viewBox="0 0 24 24" fill="none" stroke="#111827" stroke-width="2.5" stroke-linecap="round" stroke-linejoin="round"><path d="M21.174 6.812a1 1 0 0 0-3.986-3.987L3.842 16.174a2 2 0 0 0-.5.83l-1.321 4.352a.5.5 0 0 0 .623.622l4.353-1.32a2 2 0 0 0 .83-.497z"/></svg>
<svg class="b" style="left:1417.00px;top:986.73px;" width="10.40" height="10.40" viewBox="0 0 24 24" fill="none" stroke="#2b3340" stroke-width="2.3" stroke-linecap="round" stroke-linejoin="round"><rect width="20" height="16" x="2" y="4" rx="2"/><path d="m22 7-8.97 5.7a1.94 1.94 0 0 1-2.06 0L2 7"/></svg>
<div class="b" style="left:208.00px;top:1015.62px;width:1239.00px;height:1.00px;background:#e5e7eb"></div>
<div class="t" style="left:218.43px;top:1028px;font-size:9.50px;line-height:11px;font-weight:400;color:#12141c;letter-spacing:0.213px;-webkit-text-stroke:0.22px #12141c;">David Steigelfest</div>
<div class="t" style="left:218.66px;top:1042px;font-size:9.50px;line-height:11px;font-weight:400;color:#656c79;letter-spacing:0.101px;">david.steigelfest@gmail.com</div>
<div class="t" style="left:530.21px;top:1035px;font-size:9.50px;line-height:11px;font-weight:400;color:#12141c;letter-spacing:0.232px;-webkit-text-stroke:0.22px #12141c;">Gold Membership</div>
<div class="b" style="left:765.60px;top:1032.61px;width:40.60px;height:16.00px;background:#16a34a;border-radius:8px"></div>
<div class="t" style="left:773.88px;top:1036px;font-size:8.25px;line-height:9px;font-weight:700;color:#ffffff;letter-spacing:-0.085px;">Active</div>
<svg class="b" style="left:897.35px;top:1034.26px;" width="10.50" height="10.50" viewBox="0 0 24 24" fill="none" stroke="#16a34a" stroke-width="1.7" stroke-linecap="round" stroke-linejoin="round"><path d="M15 2H6a2 2 0 0 0-2 2v16a2 2 0 0 0 2 2h12a2 2 0 0 0 2-2V7Z"/><path d="M14 2v4a2 2 0 0 0 2 2h4"/><path d="m9 15 2 2 4-4"/></svg>
<div class="t" style="left:910.44px;top:1035px;font-size:9.20px;line-height:10px;font-weight:400;color:#16a34a;letter-spacing:-0.060px;-webkit-text-stroke:0.15px #16a34a;">On File</div>
<div class="t" style="left:1042.43px;top:1035px;font-size:9.50px;line-height:11px;font-weight:400;color:#636b78;letter-spacing:0.200px;">Dec 2, 2025</div>
<div class="t" style="left:1214.81px;top:1035px;font-size:9.50px;line-height:11px;font-weight:400;color:#636b78;letter-spacing:0.046px;">Jan 3, 2026</div>
<svg class="b" style="left:1387.80px;top:1035.51px;" width="10.60" height="10.60" viewBox="0 0 24 24" fill="none" stroke="#111827" stroke-width="2.5" stroke-linecap="round" stroke-linejoin="round"><path d="M21.174 6.812a1 1 0 0 0-3.986-3.987L3.842 16.174a2 2 0 0 0-.5.83l-1.321 4.352a.5.5 0 0 0 .623.622l4.353-1.32a2 2 0 0 0 .83-.497z"/></svg>
<svg class="b" style="left:1417.00px;top:1035.71px;" width="10.40" height="10.40" viewBox="0 0 24 24" fill="none" stroke="#2b3340" stroke-width="2.3" stroke-linecap="round" stroke-linejoin="round"><rect width="20" height="16" x="2" y="4" rx="2"/><path d="m22 7-8.97 5.7a1.94 1.94 0 0 1-2.06 0L2 7"/></svg>
</div></body></html>
